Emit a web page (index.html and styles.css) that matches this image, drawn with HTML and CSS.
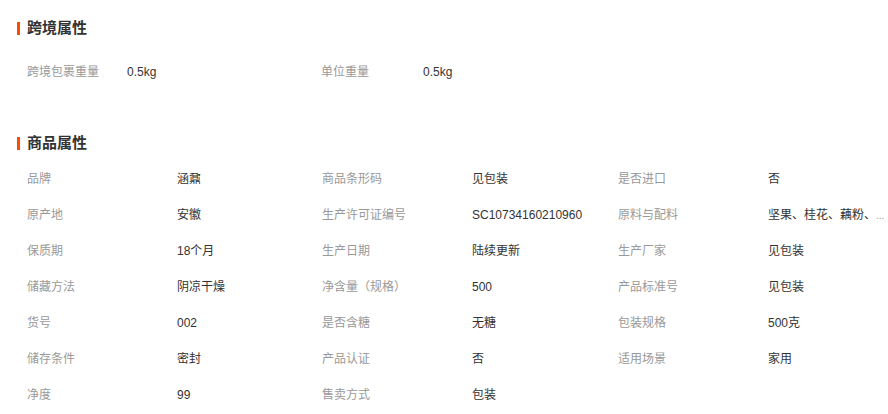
FILE: index.html
```html
<!DOCTYPE html>
<html lang="zh-CN">
<head>
    <meta charset="UTF-8">
    <meta name="viewport" content="width=device-width, initial-scale=1.0">
    <title>商品属性</title>
    <link rel="stylesheet" href="styles.css">
</head>
<body>

<!-- 跨境属性 -->
<div class="attr-block cross">
    <h3 class="attr-title">跨境属性</h3>
    <ul class="attr-list cross-list">
        <li><span class="attr-name">跨境包裹重量</span><span class="attr-value">0.5kg</span></li>
        <li><span class="attr-name">单位重量</span><span class="attr-value">0.5kg</span></li>
    </ul>
</div>

<!-- 商品属性 -->
<div class="attr-block goods">
    <h3 class="attr-title">商品属性</h3>
    <ul class="attr-list goods-list">
        <li><span class="attr-name">品牌</span><span class="attr-value">涵鼐</span></li>
        <li><span class="attr-name">商品条形码</span><span class="attr-value">见包装</span></li>
        <li><span class="attr-name">是否进口</span><span class="attr-value">否</span></li>
        <li><span class="attr-name">原产地</span><span class="attr-value">安徽</span></li>
        <li><span class="attr-name">生产许可证编号</span><span class="attr-value">SC10734160210960</span></li>
        <li><span class="attr-name">原料与配料</span><span class="attr-value">坚果、桂花、藕粉、<span class="more">...</span></span></li>
        <li><span class="attr-name">保质期</span><span class="attr-value">18个月</span></li>
        <li><span class="attr-name">生产日期</span><span class="attr-value">陆续更新</span></li>
        <li><span class="attr-name">生产厂家</span><span class="attr-value">见包装</span></li>
        <li><span class="attr-name">储藏方法</span><span class="attr-value">阴凉干燥</span></li>
        <li><span class="attr-name">净含量（规格）</span><span class="attr-value">500</span></li>
        <li><span class="attr-name">产品标准号</span><span class="attr-value">见包装</span></li>
        <li><span class="attr-name">货号</span><span class="attr-value">002</span></li>
        <li><span class="attr-name">是否含糖</span><span class="attr-value">无糖</span></li>
        <li><span class="attr-name">包装规格</span><span class="attr-value">500克</span></li>
        <li><span class="attr-name">储存条件</span><span class="attr-value">密封</span></li>
        <li><span class="attr-name">产品认证</span><span class="attr-value">否</span></li>
        <li><span class="attr-name">适用场景</span><span class="attr-value">家用</span></li>
        <li><span class="attr-name">净度</span><span class="attr-value">99</span></li>
        <li><span class="attr-name">售卖方式</span><span class="attr-value">包装</span></li>
    </ul>
</div>

</body>
</html>
```

FILE: styles.css
```css
body {
    margin: 0;
    padding: 20px 0 0;
    background-color: #fff;
    color: #333;
    font-family: "Liberation Sans", "Noto Sans CJK SC", sans-serif;
    font-size: 12px;
    overflow: hidden;
}
.attr-title {
    display: flex;
    align-items: center;
    gap: 7px;
    height: 16px;
    margin: 0;
    padding-left: 17px;
    font-size: 15px;
    font-weight: bold;
    line-height: 16px;
    color: #333;
}
.attr-title::before {
    content: "";
    width: 3px;
    height: 13px;
    background-color: #ff4a00;
}
.attr-list {
    display: grid;
    margin: 0;
    padding: 0 0 0 27px;
    list-style: none;
}
.attr-list li {
    display: flex;
    height: 36px;
    line-height: 36px;
}
.attr-name {
    flex: none;
    color: #999;
}
.attr-value {
    white-space: nowrap;
    color: #333;
}
.more {
    font-size: 10px;
    color: #999;
}
.cross-list {
    grid-template-columns: 294px 294px;
    margin-top: 18px;
}
.cross-list .attr-name {
    width: 100px;
}
.cross-list li + li .attr-name {
    width: 102px;
}
.goods {
    margin-top: 45px;
}
.goods-list {
    grid-template-columns: 295px 296px 1fr;
    margin-top: 10px;
}
.goods-list .attr-name {
    width: 150px;
}
```
